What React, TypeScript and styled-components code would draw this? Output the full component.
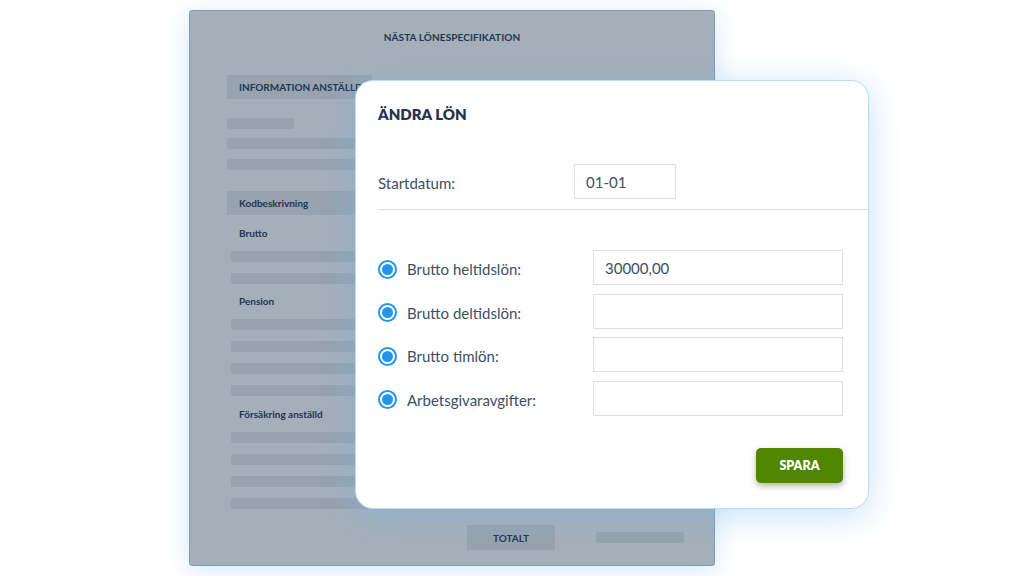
import React from "react";
import styled, { createGlobalStyle } from "styled-components";

const GlobalStyle = createGlobalStyle`
    html, body {
        margin: 0;
        padding: 0;
        background: #ffffff;
    }
    body {
        font-family: Lato, "Open Sans", "Liberation Sans", sans-serif;
        color: #1f3550;
    }
`;

const Stage = styled.div`
    position: relative;
    width: 1024px;
    height: 576px;
    overflow: hidden;
    padding: 10px 0 0 189px;
    box-sizing: border-box;
`;

const Sheet = styled.div`
    width: 526px;
    height: 556px;
    box-sizing: border-box;
    background: #a5afb9;
    border: 1px solid #7d9cb7;
    border-radius: 3px;
    box-shadow: 0 4px 24px rgba(120, 185, 240, 0.32);
    padding: 19px 0 0 37px;
    display: flex;
    flex-direction: column;
`;

const SheetTitle = styled.div`
    align-self: center;
    margin-left: -37px;
    font-size: 10px;
    font-weight: 700;
    letter-spacing: 0.1px;
    color: #1f3550;
    line-height: 14px;
`;

const SectionHead = styled.div<{ $top: number; $w: number }>`
    margin-top: ${(p) => p.$top}px;
    width: ${(p) => p.$w}px;
    height: 24px;
    background: #97a3ae;
    display: flex;
    align-items: center;
    padding-left: 12px;
    box-sizing: border-box;
    font-size: 10px;
    font-weight: 700;
    color: #1f3550;
`;

const GroupTitle = styled.div<{ $top: number }>`
    margin-top: ${(p) => p.$top}px;
    padding-left: 12px;
    font-size: 10px;
    font-weight: 700;
    color: #1f3550;
    line-height: 14px;
`;

const Bar = styled.div<{ $top: number; $w?: number; $inset?: number }>`
    margin-top: ${(p) => p.$top}px;
    margin-left: ${(p) => p.$inset ?? 0}px;
    width: ${(p) => p.$w ?? 300}px;
    height: 11px;
    border-radius: 2px;
    background: #97a3ae;
`;

const TotalRow = styled.div`
    margin-top: auto;
    margin-bottom: 15px;
    display: flex;
    align-items: center;
    gap: 41px;
    padding-left: 240px;
`;

const TotalCell = styled.div`
    width: 88px;
    height: 25px;
    background: #97a3ae;
    display: flex;
    align-items: center;
    justify-content: center;
    font-size: 10px;
    font-weight: 700;
    color: #1f3550;
`;

const TotalBar = styled.div`
    width: 88px;
    height: 11px;
    border-radius: 2px;
    background: #97a3ae;
`;

const Modal = styled.div`
    position: absolute;
    left: 355px;
    top: 80px;
    width: 514px;
    height: 429px;
    box-sizing: border-box;
    background: #ffffff;
    border: 1px solid #b9dcf6;
    border-radius: 18px;
    box-shadow: 0 6px 34px rgba(110, 180, 240, 0.4);
    padding: 24px 0 0 22px;
    display: flex;
    flex-direction: column;
`;

const ModalTitle = styled.h2`
    margin: 0;
    font-size: 15px;
    font-weight: 800;
    color: #1f3550;
    line-height: 18px;
`;

const DateRow = styled.div`
    margin-top: 41px;
    display: flex;
    align-items: center;
    padding-bottom: 10px;
    border-bottom: 1px solid #dde3ea;
`;

const Label = styled.span<{ $width: number }>`
    width: ${(p) => p.$width}px;
    padding-top: 3px;
    font-size: 15px;
    color: #3d4f63;
`;

const Field = styled.div<{ $width: number }>`
    width: ${(p) => p.$width}px;
    height: 35px;
    box-sizing: border-box;
    border: 1.5px solid #dbe0e6;
    display: flex;
    align-items: center;
    padding-left: 11px;
    font-size: 15px;
    color: #3d4f63;
`;

const Rows = styled.div`
    margin-top: 40px;
    display: flex;
    flex-direction: column;
    gap: 8.5px;
`;

const Row = styled.div`
    display: flex;
    align-items: center;
`;

const Radio = styled.span`
    width: 19px;
    height: 19px;
    box-sizing: border-box;
    border-radius: 50%;
    border: 2px solid #2196ea;
    display: flex;
    align-items: center;
    justify-content: center;
    margin: 3px 10px 0 0;
    &::after {
        content: "";
        width: 11px;
        height: 11px;
        border-radius: 50%;
        background: #2196ea;
    }
`;

const Footer = styled.div`
    margin-top: 32px;
    padding-right: 25px;
    display: flex;
    justify-content: flex-end;
`;

const SaveButton = styled.button`
    width: 87px;
    height: 35px;
    border: none;
    border-radius: 5px;
    background: #4f8600;
    color: #ffffff;
    font-family: inherit;
    font-size: 12.5px;
    font-weight: 800;
    box-shadow: 0 3px 6px rgba(0, 0, 0, 0.3);
    cursor: pointer;
`;

const salaryRows = [
    { label: "Brutto heltidslön:", value: "30000,00" },
    { label: "Brutto deltidslön:", value: "" },
    { label: "Brutto timlön:", value: "" },
    { label: "Arbetsgivaravgifter:", value: "" },
];

const App = () => {
    return (
        <>
            <GlobalStyle />
            <Stage>
                <Sheet>
                    <SheetTitle>NÄSTA LÖNESPECIFIKATION</SheetTitle>
                    <SectionHead $top={31} $w={145}>
                        INFORMATION ANSTÄLLD
                    </SectionHead>
                    <Bar $top={19} $w={67} />
                    <Bar $top={9} />
                    <Bar $top={10} />
                    <SectionHead $top={21} $w={300}>
                        Kodbeskrivning
                    </SectionHead>
                    <GroupTitle $top={11}>Brutto</GroupTitle>
                    <Bar $top={11} $inset={4} />
                    <Bar $top={11} $inset={4} />
                    <GroupTitle $top={10}>Pension</GroupTitle>
                    <Bar $top={11} $inset={4} />
                    <Bar $top={11} $inset={4} />
                    <Bar $top={11} $inset={4} />
                    <Bar $top={11} $inset={4} />
                    <GroupTitle $top={11}>Försäkring anställd</GroupTitle>
                    <Bar $top={11} $inset={4} />
                    <Bar $top={11} $inset={4} />
                    <Bar $top={11} $inset={4} />
                    <Bar $top={11} $inset={4} />
                    <TotalRow>
                        <TotalCell>TOTALT</TotalCell>
                        <TotalBar />
                    </TotalRow>
                </Sheet>
                <Modal>
                    <ModalTitle>ÄNDRA LÖN</ModalTitle>
                    <DateRow>
                        <Label $width={196}>Startdatum:</Label>
                        <Field $width={102}>01-01</Field>
                    </DateRow>
                    <Rows>
                        {salaryRows.map((row) => (
                            <Row key={row.label}>
                                <Radio />
                                <Label $width={186}>{row.label}</Label>
                                <Field $width={250}>{row.value}</Field>
                            </Row>
                        ))}
                    </Rows>
                    <Footer>
                        <SaveButton>SPARA</SaveButton>
                    </Footer>
                </Modal>
            </Stage>
        </>
    );
};

export default App;
